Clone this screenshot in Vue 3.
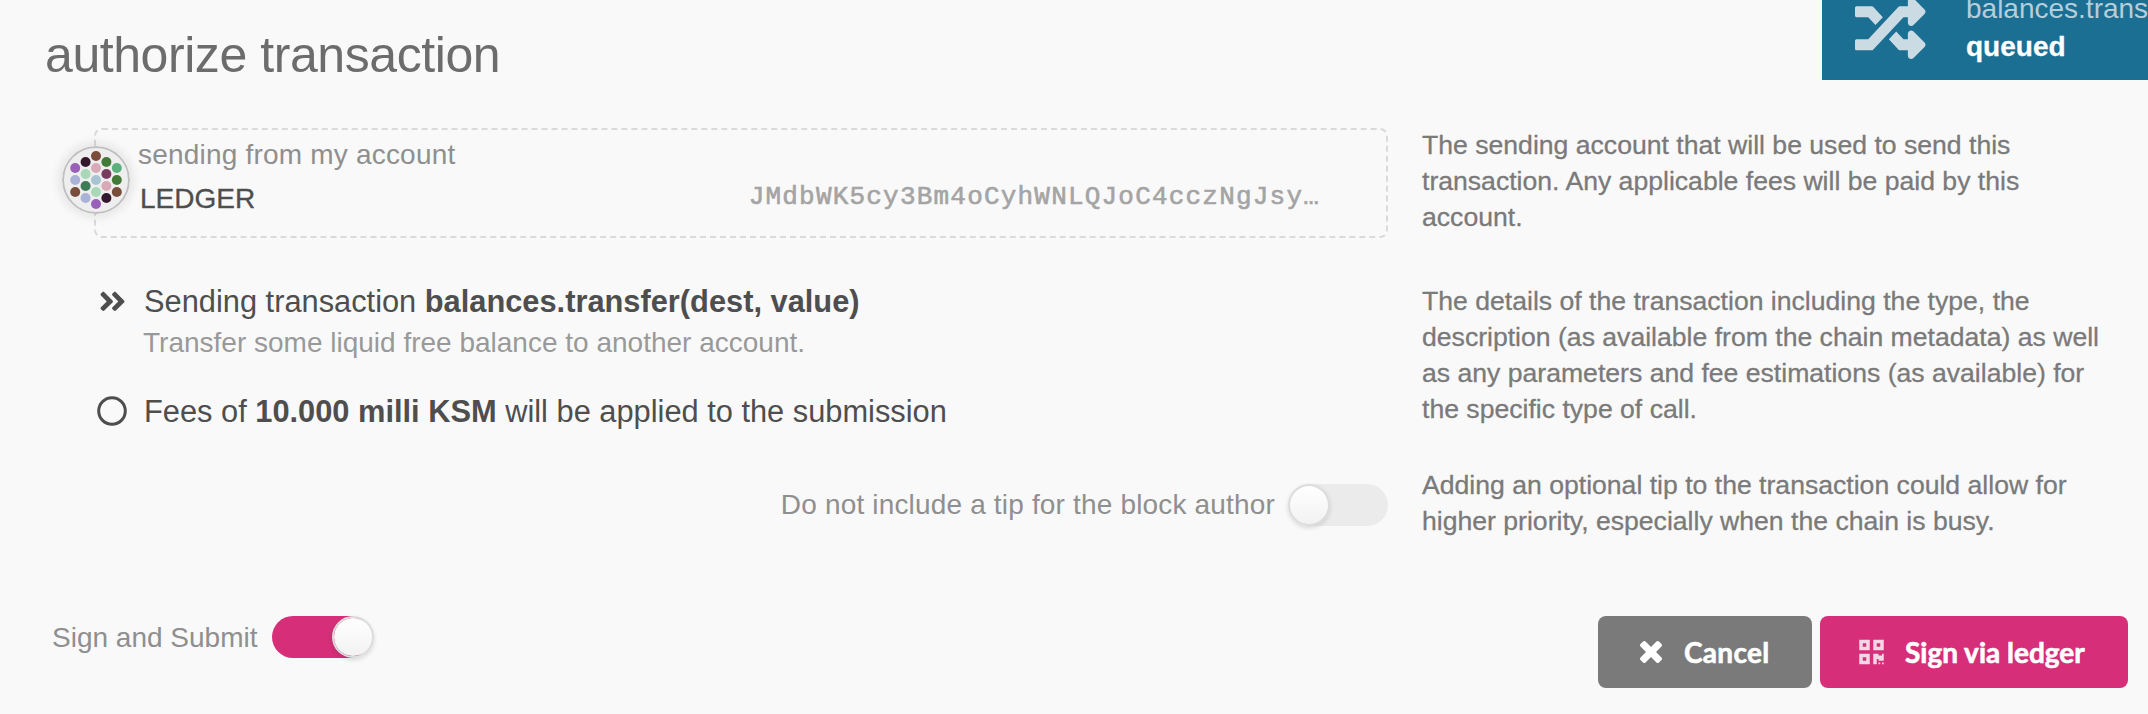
<script setup>
import { ref } from 'vue'

const tipEnabled = ref(false)
const signAndSubmit = ref(true)

// Dots of the account's identity icon, column by column.
const columns = [
  { x: -20.8, top: -12, fills: ['#9860b8', '#aab2d8', '#7a4c3a'] },
  { x: -10.4, top: -18, fills: ['#34182e', '#a8d8b8', '#3c7a58', '#aab2d8'] },
  { x: 0, top: -24, fills: ['#7a4c3a', '#d8aab8', '#a8c4d4', '#a8d8b8', '#9860b8'] },
  { x: 10.4, top: -18, fills: ['#447a38', '#783c60', '#d8aab8', '#34182e'] },
  { x: 20.8, top: -12, fills: ['#5cb07c', '#447a38', '#7a4c3a'] },
]
const dots = columns.flatMap(({ x, top, fills }) =>
  fills.map((fill, i) => ({ x, y: top + i * 12, fill }))
)
</script>

<template>
  <div class="page">
    <h1>authorize transaction</h1>

    <section class="row account-row">
      <div class="account">
        <svg class="identicon" viewBox="-34 -34 68 68">
          <circle r="33" fill="#eeeeee" stroke="#bfbfbf" stroke-width="2" />
          <circle v-for="(d, i) in dots" :key="i" :cx="d.x" :cy="d.y" r="5" :fill="d.fill" />
        </svg>
        <div class="account-label">sending from my account</div>
        <div class="account-line">
          <span class="name">LEDGER</span>
          <span class="address">JMdbWK5cy3Bm4oCyhWNLQJoC4cczNgJsy…</span>
        </div>
      </div>
      <p class="help">The sending account that will be used to send this<br />transaction. Any applicable fees will be paid by this<br />account.</p>
    </section>

    <section class="row details-row">
      <div class="details">
        <div class="item">
          <svg class="chevrons" viewBox="0 0 448 512">
            <path d="M224.3 273l-136 136c-9.4 9.4-24.6 9.4-33.9 0l-22.6-22.6c-9.4-9.4-9.4-24.6 0-33.9l96.4-96.4-96.4-96.4c-9.4-9.4-9.4-24.6 0-33.9L54.3 103c9.4-9.4 24.6-9.4 33.9 0l136 136c9.5 9.4 9.5 24.6.1 34zm192-34l-136-136c-9.4-9.4-24.6-9.4-33.9 0l-22.6 22.6c-9.4 9.4-9.4 24.6 0 33.9l96.4 96.4-96.4 96.4c-9.4 9.4-9.4 24.6 0 33.9l22.6 22.6c9.4 9.4 24.6 9.4 33.9 0l136-136c9.4-9.2 9.4-24.4 0-33.8z" />
          </svg>
          <span>Sending transaction <b>balances.transfer(dest, value)</b></span>
        </div>
        <div class="description">Transfer some liquid free balance to another account.</div>
        <div class="item fees">
          <svg class="ring" viewBox="0 0 30 30"><circle cx="15" cy="15" r="13.3" /></svg>
          <span>Fees of <b>10.000 milli KSM</b> will be applied to the submission</span>
        </div>
      </div>
      <p class="help">The details of the transaction including the type, the<br />description (as available from the chain metadata) as well<br />as any parameters and fee estimations (as available) for<br />the specific type of call.</p>
    </section>

    <section class="row tip-row">
      <div class="tip">
        <span class="toggle-label tip-label">Do not include a tip for the block author</span>
        <button class="toggle" :class="{ on: tipEnabled }" @click="tipEnabled = !tipEnabled"><i></i></button>
      </div>
      <p class="help">Adding an optional tip to the transaction could allow for<br />higher priority, especially when the chain is busy.</p>
    </section>

    <footer>
      <div class="submit">
        <span class="toggle-label submit-label">Sign and Submit</span>
        <button class="toggle" :class="{ on: signAndSubmit }" @click="signAndSubmit = !signAndSubmit"><i></i></button>
      </div>
      <div class="actions">
        <button class="btn cancel">
          <svg class="cross" viewBox="302 366 1188 1188">
            <path d="M1490 1322q0 40-28 68l-136 136q-28 28-68 28t-68-28l-294-294-294 294q-28 28-68 28t-68-28l-136-136q-28-28-28-68t28-68l294-294-294-294q-28-28-28-68t28-68l136-136q28-28 68-28t68 28l294 294 294-294q28-28 68-28t68 28l136 136q28 28 28 68t-28 68l-294 294 294 294q28 28 28 68z" />
          </svg>
          <span>Cancel</span>
        </button>
        <button class="btn sign">
          <svg class="qr" viewBox="0 0 448 512">
            <path d="M0 224h192V32H0v192zM64 96h64v64H64V96zm192-64v192h192V32H256zm128 128h-64V96h64v64zM0 480h192V288H0v192zm64-128h64v64H64v-64zm352-64h32v128h-96v-32h-32v96h-64V288h96v32h64v-32zm0 160h32v32h-32v-32zm-64 0h32v32h-32v-32z" />
          </svg>
          <span>Sign via ledger</span>
        </button>
      </div>
    </footer>

    <aside class="toast">
      <svg class="shuffle" viewBox="0 0 512 512">
        <path d="M504.971 359.029c9.373 9.373 9.373 24.569 0 33.941l-80 79.984c-15.01 15.01-40.971 4.49-40.971-16.971V416h-58.785a12.004 12.004 0 0 1-8.773-3.812l-70.556-75.596 53.333-57.143L352 336h32v-39.981c0-21.438 25.943-31.998 40.971-16.971l80 79.981zM12 176h84l52.781 56.551 53.333-57.143-70.556-75.596A11.999 11.999 0 0 0 122.785 96H12c-6.627 0-12 5.373-12 12v56c0 6.627 5.373 12 12 12zm372 0v39.984c0 21.46 25.961 31.98 40.971 16.971l80-79.984c9.373-9.373 9.373-24.569 0-33.941l-80-79.981C409.943 24.021 384 34.582 384 56.019V96h-58.785a12.004 12.004 0 0 0-8.773 3.812L96 336H12c-6.627 0-12 5.373-12 12v56c0 6.627 5.373 12 12 12h110.785c3.326 0 6.503-1.381 8.773-3.812L352 176h32z" />
      </svg>
      <div class="toast-text">
        <div class="toast-action">balances.transfer</div>
        <div class="toast-status">queued</div>
      </div>
    </aside>
  </div>
</template>

<style>
body {
  background: #f9f9f9;
}
</style>

<style scoped>
.page {
  position: relative;
  box-sizing: border-box;
  width: 2148px;
  height: 714px;
  padding-top: 25px;
  overflow: hidden;
  background: #f9f9f9;
  color: #4e4e4e;
  font-family: "Liberation Sans", Arial, sans-serif;
  font-size: 28px;
}
h1 {
  margin: 0 0 43px 45px;
  font-size: 50px;
  line-height: 60px;
  font-weight: 400;
  letter-spacing: -0.43px;
  color: #6c6c6c;
}
.row {
  display: grid;
  grid-template-columns: 1294px 1fr;
  column-gap: 34px;
  align-items: start;
  padding-left: 94px;
}
.account-row {
  height: 153px;
}
.details-row {
  height: 186px;
}
.tip-row {
  height: 149px;
}
.help {
  margin: -1px 0 0;
  font-size: 26.6px;
  line-height: 36px;
  white-space: nowrap;
  color: #7a7a7a;
  -webkit-text-stroke: 0.3px #7a7a7a;
}
.details-row .help {
  margin-top: 2px;
}
.tip-row .help {
  margin-top: 0;
}

.account {
  position: relative;
  box-sizing: border-box;
  height: 110px;
  padding: 8px 66px 0 42px;
  border: 2px dashed #dadada;
  border-radius: 8px;
}
.identicon {
  position: absolute;
  left: -34px;
  top: 16px;
  width: 68px;
  height: 68px;
  border-radius: 50%;
  box-shadow: 0 0 10px 4px rgba(0, 0, 0, 0.08);
}
.account-label {
  line-height: 34px;
  letter-spacing: 0.2px;
  color: #8f8f8f;
}
.account-line {
  display: flex;
  justify-content: space-between;
  align-items: baseline;
  margin-top: 10px;
  padding-left: 2px;
  line-height: 34px;
}
.name {
  -webkit-text-stroke: 0.3px #4e4e4e;
}
.address {
  position: relative;
  top: -4px;
  font-family: "Liberation Mono", "Courier New", monospace;
  font-size: 26px;
  letter-spacing: 1.2px;
  color: #a4a4a4;
  -webkit-text-stroke: 0.6px #a4a4a4;
}

.details {
  padding-top: 1px;
}
.item {
  display: flex;
  align-items: center;
  height: 40px;
  font-size: 30.8px;
  line-height: 40px;
  white-space: nowrap;
}
.chevrons {
  width: 27px;
  height: 30.8px;
  margin: -2px 18px 0 5px;
  fill: #4e4e4e;
}
.description {
  margin: 3px 0 31px 49px;
  line-height: 36px;
  color: #999;
}
.ring {
  width: 30px;
  height: 30px;
  margin: -2px 17px 0 3px;
  fill: none;
  stroke: #4e4e4e;
  stroke-width: 3;
}

.tip,
.submit {
  display: flex;
  align-items: center;
}
.tip {
  justify-content: flex-end;
  margin-top: 17px;
}
.toggle-label {
  line-height: 42px;
  color: #8f8f8f;
}
.tip-label {
  margin-right: 1px;
  letter-spacing: 0.17px;
}
.submit-label {
  padding-top: 2px;
}
.toggle {
  flex: none;
  width: 98px;
  height: 42px;
  margin-left: 14px;
  padding: 0;
  border: 0;
  border-radius: 21px;
  background: #ebebeb;
}
.toggle i {
  display: block;
  box-sizing: border-box;
  width: 42px;
  height: 42px;
  margin-left: -2px;
  border: 2px solid #dcdcdc;
  border-radius: 50%;
  background: linear-gradient(#fff, #f2f2f2) padding-box;
  box-shadow: 0 2px 4px rgba(34, 36, 38, 0.15);
}
.submit .toggle {
  margin-left: 15px;
}
.toggle.on {
  background: #d62e78;
}
.toggle.on i {
  margin-left: 60px;
}

footer {
  display: flex;
  justify-content: space-between;
  align-items: flex-start;
  padding: 0 20px 0 52px;
}
.submit {
  height: 42px;
}
.actions {
  display: flex;
  gap: 8px;
}
.btn {
  display: flex;
  align-items: center;
  gap: 22px;
  box-sizing: border-box;
  height: 72px;
  padding: 0;
  border: 0;
  border-radius: 8px;
  color: #fff;
  font: 700 28px/36px Lato, sans-serif;
  white-space: nowrap;
}
.btn span {
  margin-top: -1px;
  -webkit-text-stroke: 0.6px #fff;
}
.btn svg {
  flex: none;
  fill: #fff;
}
.cancel {
  width: 214px;
  padding-left: 42px;
  background: #7a7a7a;
  letter-spacing: 0.3px;
}
.sign {
  width: 308px;
  padding-left: 39px;
  background: #d62e78;
}
.sign span {
  margin-left: -1px;
}
.cross {
  width: 22px;
  height: 22px;
}
.btn .qr {
  width: 25px;
  height: 28px;
  opacity: 0.8;
}

.toast {
  position: absolute;
  top: 0;
  right: 0;
  display: flex;
  align-items: flex-end;
  box-sizing: border-box;
  width: 326px;
  height: 80px;
  padding: 0 0 15px 33px;
  overflow: hidden;
  background: #1b6f92;
}
.shuffle {
  flex: none;
  width: 70.5px;
  height: 70.5px;
  margin-bottom: 2px;
  fill: #cadbe4;
}
.toast-text {
  margin-left: 40.5px;
  line-height: 37.5px;
}
.toast-action {
  color: #b4cedb;
}
.toast-status {
  color: #fff;
  font-weight: 700;
  -webkit-text-stroke: 0.3px #fff;
}
</style>
